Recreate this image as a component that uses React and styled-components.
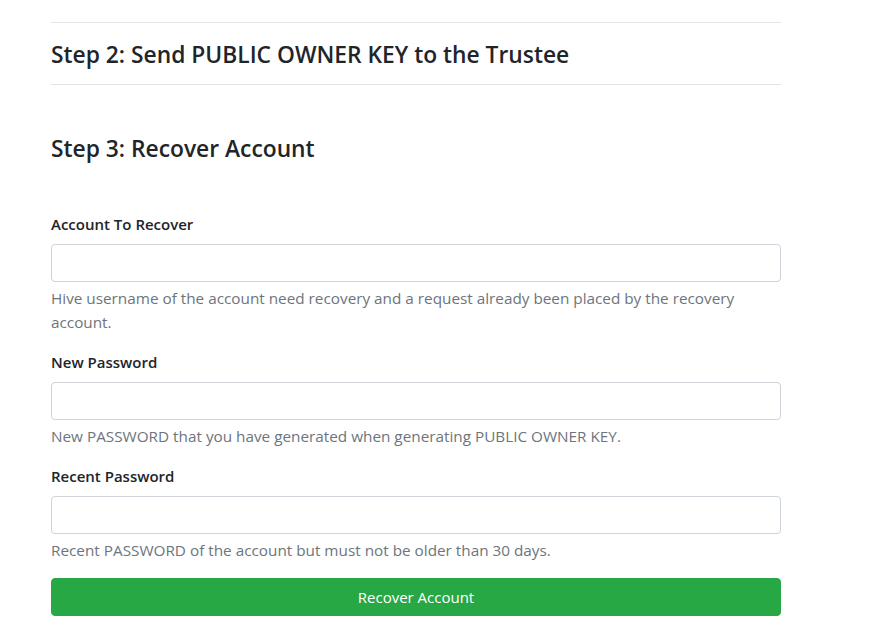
import React from 'react';
import styled, { createGlobalStyle } from 'styled-components';

const GlobalStyle = createGlobalStyle`
  body {
    margin: 0;
    background: #fff;
    font-family: "Open Sans", "Noto Sans", sans-serif;
    color: #212529;
  }
  * { box-sizing: border-box; }
`;

const Page = styled.div`
  padding: 22px 0 0 51px;
`;

const Column = styled.div`
  width: 730px;
`;

const Rule = styled.hr`
  margin: 0;
  border: 0;
  border-top: 1px solid #e5e5e5;
`;

const StepTitle = styled.h4`
  margin: 0;
  font-size: 22.8px;
  font-weight: 600;
  line-height: 29px;
  padding: ${p => (p.$first ? '17px 0 15px' : '49px 0 0')};
`;

const Form = styled.form`
  margin-top: 49px;
`;

const Group = styled.div`
  margin-bottom: 16px;
`;

const Label = styled.label`
  display: block;
  font-size: 15px;
  font-weight: 600;
  line-height: 24px;
  margin-bottom: 8px;
`;

const Input = styled.input`
  display: block;
  width: 100%;
  height: 38px;
  padding: 6px 12px;
  font-size: 16px;
  border: 1px solid #ced4da;
  border-radius: 4px;
  outline: none;
`;

const Help = styled.small`
  display: block;
  margin-top: 4px;
  font-size: 15.3px;
  line-height: 24px;
  color: #6c757d;
`;

const SubmitButton = styled.button`
  display: block;
  width: 100%;
  height: 38px;
  border: 1px solid #28a745;
  border-radius: 4px;
  background: #28a745;
  color: #fff;
  font-family: inherit;
  font-size: 15px;
  cursor: pointer;
`;

const fields = [
  {
    label: 'Account To Recover',
    help: 'Hive username of the account need recovery and a request already been placed by the recovery account.',
    type: 'text',
  },
  {
    label: 'New Password',
    help: 'New PASSWORD that you have generated when generating PUBLIC OWNER KEY.',
    type: 'password',
  },
  {
    label: 'Recent Password',
    help: 'Recent PASSWORD of the account but must not be older than 30 days.',
    type: 'password',
  },
];

export default function App() {
  return (
    <Page>
      <GlobalStyle />
      <Column>
        <Rule />
        <StepTitle $first>Step 2: Send PUBLIC OWNER KEY to the Trustee</StepTitle>
        <Rule />
        <StepTitle>Step 3: Recover Account</StepTitle>
        <Form onSubmit={e => e.preventDefault()}>
          {fields.map(f => (
            <Group key={f.label}>
              <Label>{f.label}</Label>
              <Input type={f.type} />
              <Help>{f.help}</Help>
            </Group>
          ))}
          <SubmitButton type="submit">Recover Account</SubmitButton>
        </Form>
      </Column>
    </Page>
  );
}
